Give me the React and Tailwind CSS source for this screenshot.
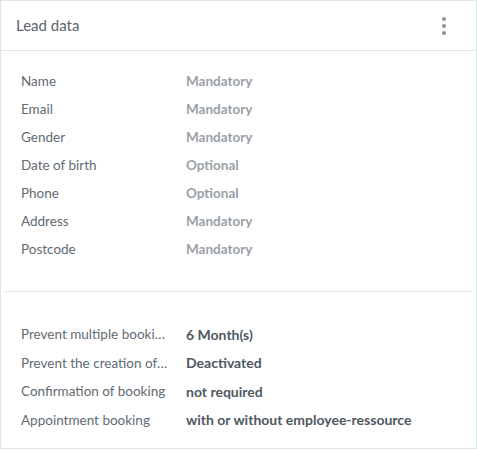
import React from 'react';

const fields = [
  ['Name', 'Mandatory'],
  ['Email', 'Mandatory'],
  ['Gender', 'Mandatory'],
  ['Date of birth', 'Optional'],
  ['Phone', 'Optional'],
  ['Address', 'Mandatory'],
  ['Postcode', 'Mandatory'],
];

const settings = [
  ['Prevent multiple bookings', '6 Month(s)'],
  ['Prevent the creation of duplicates', 'Deactivated'],
  ['Confirmation of booking', 'not required'],
  ['Appointment booking', 'with or without employee-ressource'],
];

const Row = ({ label, value, valueClass, h }) => (
  <div className={`flex items-center text-[13.5px] ${h}`}>
    <span className="w-[165px] shrink-0 pr-[17px] truncate text-[#5f6b73]">{label}</span>
    <span className={`font-bold ${valueClass}`}>{value}</span>
  </div>
);

const App = () => {
  return (
    <div className="w-[477px] h-[450px] bg-white" style={{ fontFamily: 'Lato, "Noto Sans", sans-serif' }}>
      <div className="h-[449px] border border-[#dce6e6] bg-white flex flex-col">
        <div className="flex items-center justify-between h-[50px] pl-[15px] pr-[30px] border-b border-[#dce6e6]">
          <span className="text-[15px] text-[#5a666e]">Lead data</span>
          <div className="flex flex-col gap-[3px]">
            <span className="w-[4px] h-[4px] rounded-full bg-[#8a9399]" />
            <span className="w-[4px] h-[4px] rounded-full bg-[#8a9399]" />
            <span className="w-[4px] h-[4px] rounded-full bg-[#8a9399]" />
          </div>
        </div>
        <div className="px-[20px] pt-[16px] pb-[28px]">
          {fields.map(([l, v]) => (
            <Row key={l} label={l} value={v} h="h-[28px]" valueClass="text-[#9aa1a6]" />
          ))}
        </div>
        <div className="mx-[4px] border-t border-[#dce6e6]" />
        <div className="px-[20px] pt-[28px]">
          {settings.map(([l, v]) => (
            <Row key={l} label={l} value={v} h="h-[28.5px]" valueClass="text-[14px] text-[#4e585f]" />
          ))}
        </div>
      </div>
    </div>
  );
};

export default App;
